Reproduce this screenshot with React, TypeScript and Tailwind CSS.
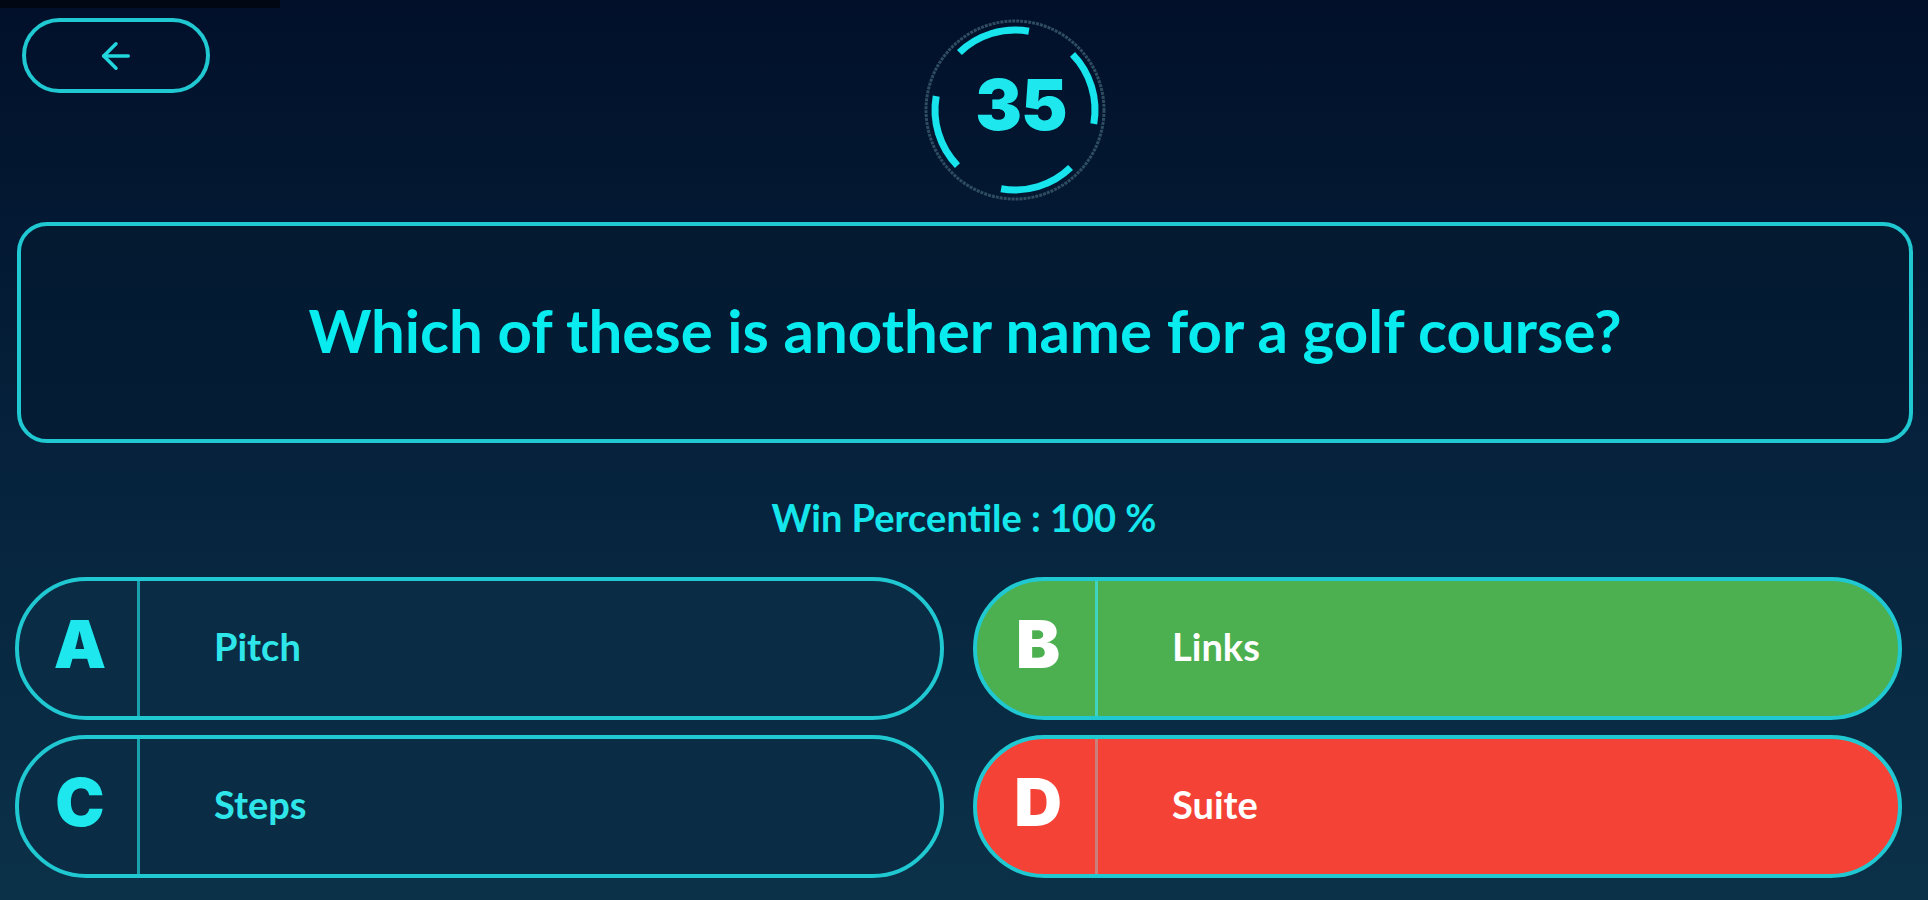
import React from 'react';

interface Answer {
  letter: string;
  label: string;
  state: 'idle' | 'correct' | 'wrong';
}

const answers: Answer[] = [
  { letter: 'A', label: 'Pitch', state: 'idle' },
  { letter: 'B', label: 'Links', state: 'correct' },
  { letter: 'C', label: 'Steps', state: 'idle' },
  { letter: 'D', label: 'Suite', state: 'wrong' },
];

const CX = 92;

const pt = (r: number, deg: number) => {
  const a = (deg * Math.PI) / 180;
  return `${(CX + r * Math.sin(a)).toFixed(2)} ${(CX - r * Math.cos(a)).toFixed(2)}`;
};

const arc = (r: number, from: number, to: number) =>
  `M ${pt(r, from)} A ${r} ${r} 0 0 1 ${pt(r, to)}`;

const Timer: React.FC<{ value: number }> = ({ value }) => {
  const segments: [number, number][] = [
    [316, 370],
    [46, 100],
    [136, 190],
    [226, 280],
  ];
  return (
    <div className="relative w-[184px] h-[184px] flex items-center justify-center">
      <svg className="absolute inset-0" width="184" height="184" viewBox="0 0 184 184">
        <circle cx={CX} cy={CX} r="89" fill="none" stroke="#2f4d60" strokeWidth="3" strokeDasharray="3 1" />
        {segments.map(([a, b]) => (
          <path key={a} d={arc(80, a, b)} fill="none" stroke="#17e4ec" strokeWidth="7" />
        ))}
      </svg>
      <span className="relative ml-[12px] -mt-[10px] font-['Inter','DejaVu_Sans',sans-serif] font-black text-[70px] leading-none tracking-[-1px] text-[#1ee8ee]">
        {value}
      </span>
    </div>
  );
};

const AnswerButton: React.FC<{ answer: Answer }> = ({ answer }) => {
  const bg =
    answer.state === 'correct'
      ? 'bg-[#4caf50]'
      : answer.state === 'wrong'
        ? 'bg-[#f44336]'
        : 'bg-[#0a2c44]';
  const letterColor = answer.state === 'idle' ? 'text-[#1ee8ee]' : 'text-white';
  const textColor = answer.state === 'idle' ? 'text-[#2ee6ea]' : 'text-white';
  const divider =
    answer.state === 'idle' ? 'border-[#1a9fae]' : answer.state === 'correct' ? 'border-[#40d3c0]' : 'border-[#c9807a]';
  return (
    <div className={`flex h-[143px] items-stretch rounded-full border-[4px] border-[#20c8d2] overflow-hidden ${bg}`}>
      <div className={`w-[121px] flex items-center justify-center border-r-[3px] ${divider}`}>
        <span className={`pl-[4px] -mt-[10px] font-['Inter','DejaVu_Sans',sans-serif] font-black text-[66px] leading-none ${letterColor}`}>
          {answer.letter}
        </span>
      </div>
      <div className="flex items-center pl-[74px] -mt-[4px]">
        <span className={`font-['Lato','Open_Sans',sans-serif] font-bold text-[38px] ${textColor}`}>{answer.label}</span>
      </div>
    </div>
  );
};

const App: React.FC = () => {
  return (
    <div className="w-full h-[900px] overflow-hidden bg-gradient-to-b from-[#02102a] via-[#06223c] to-[#0b3148] font-['Lato',sans-serif]">
      <div className="h-[8px] w-[280px] bg-[#010814]" />
      <header className="flex items-start pt-[10px]">
        <button className="ml-[22px] w-[188px] h-[75px] rounded-full border-[4px] border-[#20c8d2] flex items-center justify-center">
          <svg width="42" height="42" viewBox="0 0 24 24" fill="none" stroke="#22d6de" strokeWidth="2" strokeLinecap="round" strokeLinejoin="round">
            <path d="m12 19-7-7 7-7" />
            <path d="M19 12H5" />
          </svg>
        </button>
        <div className="ml-[713px]">
          <Timer value={35} />
        </div>
      </header>

      <section className="mt-[20px] ml-[17px] mr-[15px] h-[221px] rounded-[30px] border-[4px] border-[#20c8d2] bg-[#041a31]/60 flex items-center justify-center">
        <h1 className="font-['Lato','Open_Sans',sans-serif] font-bold text-[60px] text-[#08ecf0] -mt-[6px]">
          Which of these is another name for a golf course?
        </h1>
      </section>

      <p className="mt-[51px] text-center font-['Lato',sans-serif] font-bold text-[38px] leading-[46px] text-[#14e6ec]">
        Win Percentile : 100 %
      </p>

      <div className="mt-[37px] pl-[15px] pr-[26px] grid grid-cols-2 gap-x-[29px] gap-y-[15px]">
        {answers.map((a) => (
          <AnswerButton key={a.letter} answer={a} />
        ))}
      </div>
    </div>
  );
};

export default App;
